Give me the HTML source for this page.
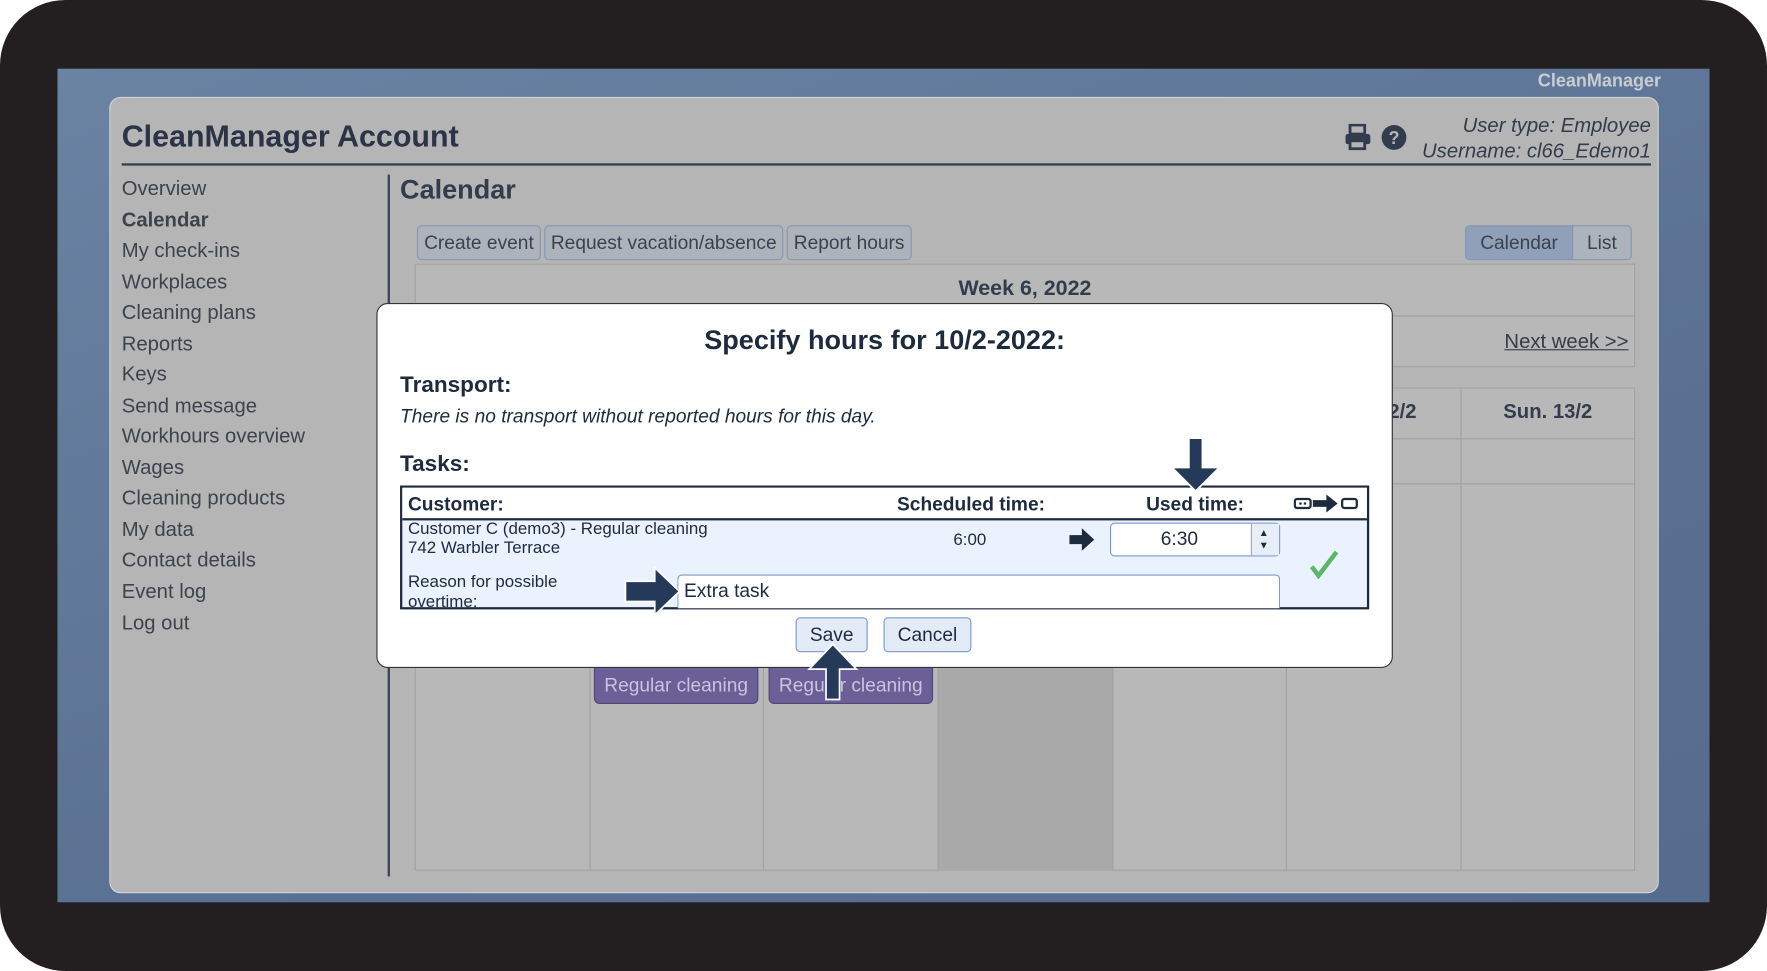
<!DOCTYPE html>
<html><head><meta charset="utf-8"><style>
*{box-sizing:border-box;margin:0;padding:0}
html,body{width:1767px;height:971px;overflow:hidden;background:#fff;font-family:"Liberation Sans",sans-serif}
#w{position:absolute;left:0;top:0;width:1568px;height:862px;transform:scale(1.12691,1.12645);transform-origin:0 0}
.a{position:absolute}
#frame{left:0;top:0;width:1568px;height:862px;background:#231f20;border-radius:58px}
#scr{left:51px;top:61px;width:1466px;height:740px;background:linear-gradient(160deg,#6a83a3,#5a7193 60%,#566c8e)}
#panel{left:97px;top:86px;width:1375px;height:707px;background:#b5b5b5;border:1px solid #cfd3d8;border-radius:10px}
.nav{left:108px;font-size:18px;color:#3d434d}
.btn{top:200px;height:31px;background:#adb3bb;border:1px solid #8397b4;border-radius:4px;font-size:17px;color:#3a4250;text-align:center;line-height:29px}
.ln{background:#9ea1a6}
.ev{top:592px;height:33px;background:#6b5f98;border:1px solid #4f467a;border-radius:0 0 5px 5px;color:#c9c3dd;font-size:17px;text-align:center;line-height:31px}
#modal{left:334px;top:269px;width:902px;height:324px;background:#fff;border:1px solid #333;border-radius:10px}
.dk{color:#1e2a3d}
</style></head><body><div id="w">
<div class="a" id="frame"></div>
<div class="a" id="scr"></div>
<div class="a" style="left:1300px;top:64px;width:174px;text-align:right;font-size:16px;font-weight:bold;color:#c9ccd1">CleanManager</div>
<div class="a" id="panel"></div>
<div class="a" style="left:108px;top:106px;font-size:27px;font-weight:bold;color:#2b3447">CleanManager Account</div>
<svg class="a" style="left:1192px;top:110px" width="26" height="24" viewBox="0 0 26 24"><rect x="6" y="1" width="13" height="8" fill="none" stroke="#333c4c" stroke-width="2.5"/><rect x="2" y="9" width="22" height="9" rx="2" fill="#333c4c"/><rect x="6" y="15" width="13" height="7" fill="#b5b5b5" stroke="#333c4c" stroke-width="2.5"/></svg>
<svg class="a" style="left:1225px;top:110px" width="24" height="24" viewBox="0 0 24 24"><circle cx="12" cy="12" r="11" fill="#333c4c"/><text x="12" y="18" font-size="16" font-weight="bold" text-anchor="middle" fill="#b5b5b5" font-family="Liberation Sans">?</text></svg>
<div class="a" style="left:1200px;top:100px;width:265px;text-align:right;font-size:18px;font-style:italic;color:#333c4c;line-height:23px">User type: Employee<br>Username: cl66_Edemo1</div>
<div class="a" style="left:108px;top:145px;width:1357px;height:2px;background:#333c4c"></div>
<div class="a nav" style="top:157px">Overview</div>
<div class="a nav" style="top:185px;font-weight:bold">Calendar</div>
<div class="a nav" style="top:212px">My check-ins</div>
<div class="a nav" style="top:240px">Workplaces</div>
<div class="a nav" style="top:267px">Cleaning plans</div>
<div class="a nav" style="top:295px">Reports</div>
<div class="a nav" style="top:322px">Keys</div>
<div class="a nav" style="top:350px">Send message</div>
<div class="a nav" style="top:377px">Workhours overview</div>
<div class="a nav" style="top:405px">Wages</div>
<div class="a nav" style="top:432px">Cleaning products</div>
<div class="a nav" style="top:460px">My data</div>
<div class="a nav" style="top:487px">Contact details</div>
<div class="a nav" style="top:515px">Event log</div>
<div class="a nav" style="top:543px">Log out</div>
<div class="a" style="left:344px;top:155px;width:2px;height:623px;background:#3a4150"></div>
<div class="a" style="left:355px;top:155px;font-size:24px;font-weight:bold;color:#333c4c">Calendar</div>
<div class="a btn" style="left:370px;width:110px">Create event</div>
<div class="a btn" style="left:483px;width:212px">Request vacation/absence</div>
<div class="a btn" style="left:698px;width:111px">Report hours</div>
<div class="a btn" style="left:1300px;width:96px;background:#8fa0b8;border-radius:4px 0 0 4px">Calendar</div>
<div class="a btn" style="left:1395px;width:53px;border-radius:0 4px 4px 0">List</div>
<div class="a" style="left:368px;top:234px;width:1083px;height:92px;border:1px solid #a0a3a8;background:#b8b8b8"></div>
<div class="a ln" style="left:368px;top:280px;width:1083px;height:1px"></div>
<div class="a" style="left:368px;top:246px;width:1083px;text-align:center;font-size:19px;font-weight:bold;color:#333c4c">Week 6, 2022</div>
<div class="a" style="left:1335px;top:293px;font-size:18px;color:#333c4c;text-decoration:underline">Next week &gt;&gt;</div>
<div class="a" style="left:368px;top:344px;width:1083px;height:429px;border:1px solid #a0a3a8;background:#b8b8b8"></div>
<div class="a" style="left:832px;top:344px;width:155px;height:429px;background:#a9a9a9"></div>
<div class="a ln" style="left:368px;top:389px;width:1083px;height:1px"></div>
<div class="a ln" style="left:368px;top:429px;width:1083px;height:1px"></div>
<div class="a ln" style="left:523px;top:344px;width:1px;height:429px"></div>
<div class="a ln" style="left:677px;top:344px;width:1px;height:429px"></div>
<div class="a ln" style="left:832px;top:344px;width:1px;height:429px"></div>
<div class="a ln" style="left:987px;top:344px;width:1px;height:429px"></div>
<div class="a ln" style="left:1141px;top:344px;width:1px;height:429px"></div>
<div class="a ln" style="left:1296px;top:344px;width:1px;height:429px"></div>
<div class="a" style="left:1232px;top:355px;font-size:18px;font-weight:bold;color:#333c4c">2/2</div>
<div class="a" style="left:1296px;top:355px;width:155px;text-align:center;font-size:18px;font-weight:bold;color:#333c4c">Sun. 13/2</div>
<div class="a ev" style="left:527px;width:146px">Regular cleaning</div>
<div class="a ev" style="left:682px;width:146px">Regular cleaning</div>
<div class="a" id="modal"></div>
<div class="a dk" style="left:334px;top:289px;width:902px;text-align:center;font-size:24px;font-weight:bold">Specify hours for 10/2-2022:</div>
<div class="a dk" style="left:355px;top:331px;font-size:20px;font-weight:bold">Transport:</div>
<div class="a dk" style="left:355px;top:360px;font-size:17px;font-style:italic">There is no transport without reported hours for this day.</div>
<div class="a dk" style="left:355px;top:401px;font-size:20px;font-weight:bold">Tasks:</div>
<div class="a" style="left:355px;top:431px;width:860px;height:110px;border:2px solid #1e2a3d;background:#eaf2fd"></div>
<div class="a" style="left:357px;top:433px;width:856px;height:29px;background:#fff;border-bottom:2px solid #1e2a3d"></div>
<div class="a dk" style="left:362px;top:438px;font-size:17px;font-weight:bold">Customer:</div>
<div class="a dk" style="left:796px;top:438px;font-size:17px;font-weight:bold">Scheduled time:</div>
<div class="a dk" style="left:1017px;top:438px;font-size:17px;font-weight:bold">Used time:</div>
<svg class="a" style="left:1148px;top:438px" width="58" height="18" viewBox="0 0 58 18"><rect x="1" y="5" width="14" height="8" rx="2" fill="none" stroke="#1e2a3d" stroke-width="2"/><rect x="5" y="8" width="2" height="2" fill="#1e2a3d"/><rect x="9" y="8" width="2" height="2" fill="#1e2a3d"/><path d="M17 6h12V1l10 8-10 8v-5H17z" fill="#1e2a3d"/><rect x="43" y="5" width="13" height="8" rx="2" fill="none" stroke="#1e2a3d" stroke-width="2"/></svg>
<div class="a dk" style="left:362px;top:461px;font-size:15px;line-height:17px">Customer C (demo3) - Regular cleaning<br>742 Warbler Terrace</div>
<div class="a dk" style="left:846px;top:471px;font-size:15px">6:00</div>
<svg class="a" style="left:948px;top:469px" width="24" height="20" viewBox="0 0 24 20"><path d="M1 6h11V0l11 10-11 10v-6H1z" fill="#1e2a3d"/></svg>
<div class="a" style="left:985px;top:464px;width:151px;height:30px;background:#fff;border:1px solid #7a98cf;border-radius:4px"></div>
<div class="a" style="left:1110px;top:465px;width:25px;height:28px;background:#e8eef7;border-left:1px solid #aab"></div>
<div class="a" style="left:1117px;top:468px;font-size:9px;color:#1e2a3d;line-height:11px">▲<br>▼</div>
<div class="a dk" style="left:1030px;top:469px;font-size:17px">6:30</div>
<svg class="a" style="left:1162px;top:488px" width="26" height="26" viewBox="0 0 26 26"><path d="M2 15l6 8L24 2" fill="none" stroke="#5bb665" stroke-width="4"/></svg>
<div class="a dk" style="left:362px;top:508px;font-size:15px;line-height:18px;height:31px;overflow:hidden">Reason for possible<br>overtime:</div>
<div class="a" style="left:601px;top:510px;width:535px;height:30px;background:#fff;border:1px solid #7a98cf;border-radius:4px 4px 0 0;border-bottom:none"></div>
<div class="a dk" style="left:607px;top:515px;font-size:17px">Extra task</div>
<svg class="a" style="left:553px;top:503px" width="52" height="44" viewBox="0 0 52 44"><path d="M2 13h26V1l22 21-22 21V31H2z" fill="#253a5a" stroke="#fff" stroke-width="1.5"/></svg>
<svg class="a" style="left:1038px;top:388px" width="46" height="50" viewBox="0 0 46 50"><path d="M17 1h12v26h15L23 48 2 27h15z" fill="#253a5a" stroke="#fff" stroke-width="1.5"/></svg>
<div class="a" style="left:706px;top:548px;width:64px;height:31px;background:#e3ebf7;border:1px solid #7a98cf;border-radius:4px;font-size:17px;text-align:center;line-height:29px;color:#1e2a3d">Save</div>
<div class="a" style="left:784px;top:548px;width:78px;height:31px;background:#e3ebf7;border:1px solid #7a98cf;border-radius:4px;font-size:17px;text-align:center;line-height:29px;color:#1e2a3d">Cancel</div>
<svg class="a" style="left:716px;top:570px" width="46" height="52" viewBox="0 0 46 52"><path d="M23 2l21 22H29v27H17V24H2z" fill="#253a5a" stroke="#fff" stroke-width="1.5"/></svg>
</div></body></html>
